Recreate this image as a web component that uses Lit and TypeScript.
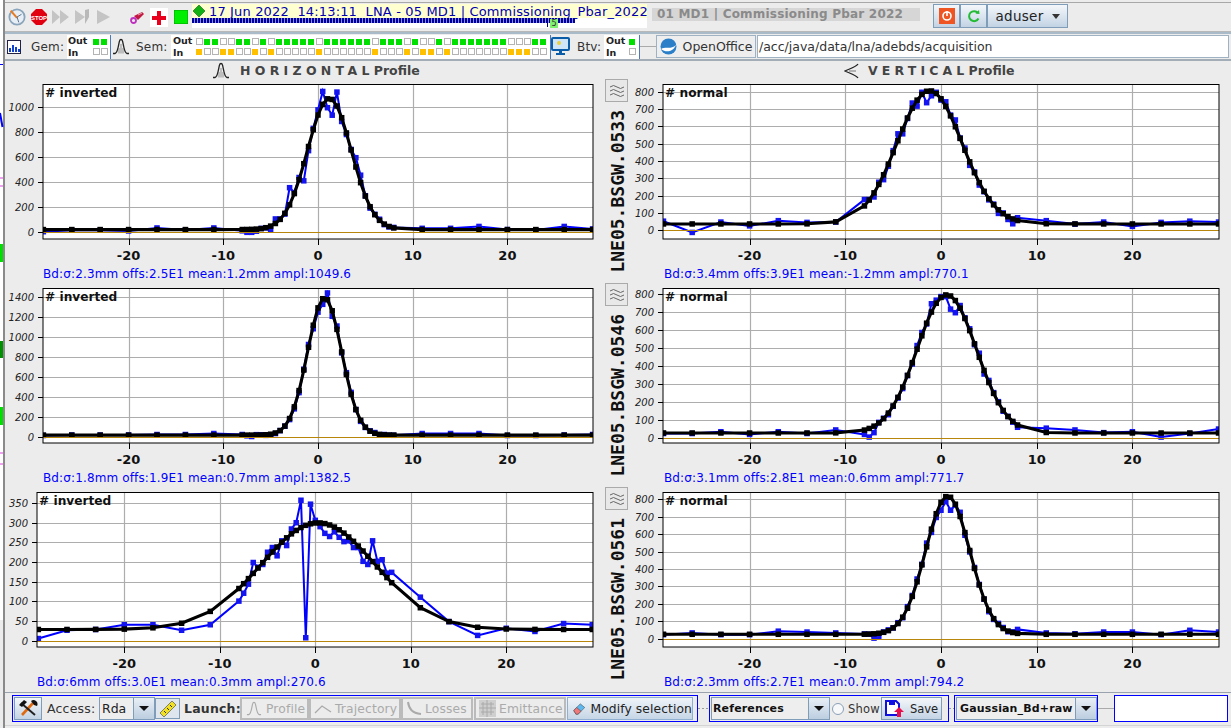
import { LitElement, html, css, svg } from "lit";
import { customElement } from "lit/decorators.js";

const XS: number[] = [-29, -26, -23, -20, -17, -14, -11];
for (let i = -16; i <= 16; i++) XS.push(i / 2);
XS.push(11, 14, 17, 20, 23, 26, 29);

interface Plot {
  tag: string; left: number; right: number; x0: number; xs: number; y0: number; yu: number;
  ticks: number[]; offs: number; amp: number; mean: number; sig: number; blue: Record<string, number>;
  caption: string; seed: number; labelEnd: number; name?: string;
}
const seq = (n: number, s: number) => Array.from({ length: n }, (_, i) => i * s);

const PLOTS: Plot[] = [
  { tag: "# inverted", left: 43, right: 593, x0: 318, xs: 9.47, y0: 152.7, yu: 0.125, ticks: seq(6, 200), offs: 25, amp: 1050, mean: 1.2, sig: 2.3, seed: 1, labelEnd: 34,
    blue: { "-29": 8, "-26": 20, "-23": 20, "-20": 14, "-17": 38, "-14": 22, "-11": 38, "-8": 15, "-7.5": 3, "-7": 3, "-6.5": 12, "-5": 25, "-4.5": 110, "-4": 110, "-3": 360, "-1.5": 415, "0.5": 1130, "1": 1000, "1.5": 940, "2": 1125, "4": 600, "4.5": 460, "11": 35, "14": 35, "17": 50, "20": 25, "23": 22, "26": 50, "29": 30 },
    caption: "Bd:σ:2.3mm offs:2.5E1 mean:1.2mm ampl:1049.6" },
  { tag: "# normal", left: 663, right: 1219, x0: 941, xs: 9.57, y0: 150.7, yu: 0.173, ticks: seq(9, 100), offs: 39, amp: 770, mean: -1.2, sig: 3.4, seed: 2, labelEnd: 654, name: "LNE05.BSGW.0533",
    blue: { "-29": 55, "-26": -10, "-23": 50, "-20": 28, "-17": 58, "-14": 48, "-11": 50, "-8": 180, "-7.5": 180, "-7": 195, "-6": 295, "-4.5": 560, "-4": 560, "-2.5": 720, "-2": 800, "-1.5": 740, "-1": 780, "-0.5": 800, "0": 755, "1.5": 640, "6": 100, "7": 65, "7.5": 40, "8": 75, "11": 58, "14": 38, "17": 50, "20": 25, "23": 48, "26": 55, "29": 50 },
    caption: "Bd:σ:3.4mm offs:3.9E1 mean:-1.2mm ampl:770.1" },
  { tag: "# inverted", left: 43, right: 593, x0: 318, xs: 9.47, y0: 153, yu: 0.0993, ticks: seq(8, 200), offs: 19, amp: 1382, mean: 0.7, sig: 1.8, seed: 3, labelEnd: 34,
    blue: { "-29": 15, "-26": 20, "-23": 20, "-20": 20, "-17": 25, "-14": 25, "-11": 35, "-8": 25, "-7": 5, "11": 35, "14": 35, "17": 35, "20": 15, "23": 15, "26": 20, "29": 25 },
    caption: "Bd:σ:1.8mm offs:1.9E1 mean:0.7mm ampl:1382.5" },
  { tag: "# normal", left: 663, right: 1219, x0: 941, xs: 9.57, y0: 154, yu: 0.179, ticks: seq(9, 100), offs: 28, amp: 771.7, mean: 0.6, sig: 3.1, seed: 4, labelEnd: 654, name: "LNE05.BSGW.0546",
    blue: { "-29": 25, "-26": 25, "-23": 35, "-20": 20, "-17": 35, "-14": 25, "-11": 45, "-8": 20, "-7.5": 5, "-7": 30, "-1": 750, "-0.5": 770, "0": 790, "0.5": 790, "1": 720, "1.5": 700, "2": 740, "3": 610, "8": 60, "11": 55, "14": 45, "17": 30, "20": 35, "23": 5, "26": 25, "29": 50 },
    caption: "Bd:σ:3.1mm offs:2.8E1 mean:0.6mm ampl:771.7" },
  { tag: "# inverted", left: 37, right: 593, x0: 315.3, xs: 9.55, y0: 153.3, yu: 0.394, ticks: seq(8, 50), offs: 30, amp: 270.6, mean: 0.3, sig: 6, seed: 5, labelEnd: 28,
    blue: { "-29": 7, "-26": 28, "-23": 30, "-20": 42, "-17": 42, "-14": 28, "-11": 42, "-8": 102, "-7.5": 122, "-7": 145, "-6.5": 200, "-6": 188, "-5.5": 195, "-5": 226, "-4.5": 238, "-4": 217, "-3.5": 255, "-3": 243, "-2.5": 285, "-2": 301, "-1.5": 358, "-1": 9, "-0.5": 348, "0": 307, "0.5": 291, "1": 274, "1.5": 266, "2": 278, "2.5": 264, "3": 253, "3.5": 255, "4": 238, "4.5": 238, "5": 203, "5.5": 195, "6": 255, "6.5": 203, "7": 207, "7.5": 173, "8": 175, "11": 112, "14": 50, "17": 15, "20": 33, "23": 25, "26": 45, "29": 42 },
    caption: "Bd:σ:6mm offs:3.0E1 mean:0.3mm ampl:270.6" },
  { tag: "# normal", left: 663, right: 1219, x0: 941, xs: 9.57, y0: 151, yu: 0.174, ticks: seq(9, 100), offs: 27, amp: 794.2, mean: 0.7, sig: 2.3, seed: 6, labelEnd: 654, name: "LNE05.BSGW.0561",
    blue: { "-29": 25, "-26": 35, "-23": 25, "-20": 25, "-17": 45, "-14": 40, "-11": 35, "-7": 5, "-6.5": 15, "0": 740, "0.5": 790, "1": 740, "1.5": 770, "8": 55, "11": 35, "14": 30, "17": 40, "20": 40, "23": 25, "26": 50, "29": 40 },
    caption: "Bd:σ:2.3mm offs:2.7E1 mean:0.7mm ampl:794.2" },
];

const SEM_OUT = "01100110101111101111110111" + "01" + "00101111111000" + "11";
const SEM_IN = [0, 3, 4, 7, 9, 15, 22, 26, 28, 29, 31, 39, 40, 41];

const gauss = svg`<path d="M1 15.5 H3 C6 15 6.5 6 7.5 3 C8 1 10 1 10.5 3 C11.5 6 12 15 15 15.5 H17" fill="none" stroke="#222" stroke-width="1.3"/><path d="M7 15.5V10M9 15.5V6M11 15.5V10" stroke="#777" stroke-width=".8" fill="none"/>`;

function chart(p: Plot, idx: number) {
  const ox = p.left > 600 ? 632 : 5;
  const W = p.left > 600 ? 599 : 595;
  const top = 4.5, bottom = 159;
  const sx = (x: number) => p.x0 + x * p.xs;
  const sy = (v: number) => p.y0 - v * p.yu;
  const fit = (x: number) => p.offs + p.amp * Math.exp(-((x - p.mean) ** 2) / (2 * p.sig * p.sig));
  const noise = (i: number) => { const v = Math.sin((i + 1) * 12.9898 + p.seed * 78.233) * 43758.5453; return v - Math.floor(v) - 0.5; };
  const blue = XS.map((x, i) => {
    const o = p.blue[String(x)];
    if (o !== undefined) return o;
    return fit(x) + noise(i) * (p.amp * 0.012 + (fit(x) - p.offs) * 0.09);
  });
  const black = XS.map(fit);
  const pts = (ys: number[]) => XS.map((x, i) => `${sx(x).toFixed(1)},${sy(ys[i]).toFixed(1)}`).join(" ");
  const gx = [-20, -10, 0, 10, 20];
  const cid = `c${idx}`;
  const zero = Math.floor(sy(0)) + 0.5;
  return html`<svg class="chart" width=${W} height="184" viewBox="${ox} 0 ${W} 184">
    <defs><clipPath id=${cid}><rect x=${p.left} y=${top} width=${p.right - p.left} height=${bottom - top}></rect></clipPath></defs>
    <rect x=${p.left} y=${top} width=${p.right - p.left} height=${bottom - top} fill="#fff"></rect>
    ${gx.map((g) => { const x = Math.round(sx(g)) + 0.5; return svg`<line x1=${x} x2=${x} y1=${top} y2=${bottom} stroke="#adadad" stroke-width="1.2"/><line x1=${x} x2=${x} y1=${bottom} y2=${bottom + 6} stroke="#000"/><text x=${sx(g)} y="180" class="xl">${g}</text>`; })}
    ${p.ticks.map((t) => { const y = Math.floor(sy(t)) + 0.5; return svg`<line x1=${p.left} x2=${p.right} y1=${y} y2=${y} stroke="#adadad" stroke-width="1.2"/><line x1=${p.left - 5} x2=${p.left} y1=${y} y2=${y} stroke="#000"/><text x=${p.labelEnd} y=${y + 3.5} class="yl">${t}</text>`; })}
    <g clip-path="url(#${cid})">
      <polyline points=${pts(blue)} fill="none" stroke="#0000ff" stroke-width="2"/>
      ${XS.map((x, i) => svg`<rect x=${sx(x) - 2.75} y=${sy(blue[i]) - 2.75} width="5.5" height="5.5" fill="#1414f0"/>`)}
      <polyline points=${pts(black)} fill="none" stroke="#000" stroke-width="3.1"/>
      ${XS.map((x, i) => svg`<rect x=${sx(x) - 2.75} y=${sy(black[i]) - 2.75} width="5.5" height="5.5" fill="#000"/>`)}
      <rect x=${p.left} y=${zero - 0.5} width=${p.right - p.left} height="1" fill="#b8860b"/>
    </g>
    <rect x=${p.left} y=${top} width=${p.right - p.left} height=${bottom - top} fill="none" stroke="#000"></rect>
    <text x=${p.left + 2} y="17" class="tag">${p.tag}</text>
  </svg>`;
}

const waves = html`<svg width="16" height="14" viewBox="0 0 16 14"><path d="M1 3q3.5-3 7 0t7 0M1 7q3.5-3 7 0t7 0M1 11q3.5-3 7 0t7 0" fill="none" stroke="#666" stroke-width="1"/></svg>`;

@customElement("app-root")
export class AppRoot extends LitElement {
  static styles = css`
    :host { display: block; width: 1231px; height: 728px; overflow: hidden; background: #ececec; font-family: "DejaVu Sans", sans-serif; color: #222; }
    .page { display: flex; width: 1231px; height: 728px; }
    .strip { flex: none; width: 5px; height: 728px; display: block; }
    .main { flex: 1; min-width: 0; display: flex; flex-direction: column; }
    .r1 { flex: none; height: 28px; margin-top: 2px; border-top: 1px solid #a8a8a8; display: flex; align-items: center; border-bottom: 1px solid #b8b8b8; }
    .r1 > svg { flex: none; }
    .status { flex: none; width: 455px; height: 24px; margin-left: 4px; background: #fff; display: flex; flex-direction: column; position: relative; align-self: flex-start; margin-top: 1px; }
    .stext { height: 14px; background: #ffffd0; color: #0000b0; font-size: 13px; line-height: 13px; white-space: pre; display: flex; align-items: center; padding-left: 1px; letter-spacing: 0.15px; }
    .stext svg { flex: none; margin-right: 4px; }
    .ticks { width: 383px; height: 5px; margin-top: 0; background: repeating-linear-gradient(90deg, #0000a0 0 2px, #8d8dd8 2px 3px); }
    .mark { position: absolute; left: 355px; top: 14px; width: 1px; height: 9px; background: #000080; }
    .badge { position: absolute; left: 358px; top: 15px; width: 8px; height: 9px; background: #80f070; color: #333; font-size: 8px; line-height: 9px; text-align: center; }
    .ghost { flex: none; width: 268px; height: 13px; margin-left: 5px; background: #d6d6d6; color: #8a8a8a; font-size: 12px; font-weight: 700; line-height: 13px; padding-left: 5px; box-sizing: border-box; letter-spacing: 0.2px; white-space: nowrap; align-self: flex-start; margin-top: 5px; overflow: hidden; }
    .btn { flex: none; display: flex; align-items: center; justify-content: center; box-sizing: border-box; border: 1px solid #7f9db9; background: linear-gradient(#f4f7fa, #c3d3e4); font-size: 12px; color: #222; }
    .top-btns { display: flex; margin-left: 13px; height: 24px; align-self: flex-start; margin-top: 1px; }
    .user { width: 81px; font-size: 13.5px; font-weight: 500; gap: 8px; letter-spacing: .3px; }
    .r2 { flex: none; height: 25px; border-top: 2px solid #a9bac9; border-bottom: 2px solid #a3adb7; display: flex; align-items: center; }
    .lab { flex: none; font-size: 12px; color: #333; letter-spacing: .2px; }
    .wbox { flex: none; height: 24px; background: #fff; display: flex; align-items: center; box-sizing: border-box; }
    .oi { font-size: 9.5px; font-weight: 700; line-height: 11.5px; width: 20px; color: #222; }
    .rows { display: flex; flex-direction: column; gap: 3px; }
    .row { display: flex; gap: 1px; }
    .sq { width: 7px; height: 7px; box-sizing: border-box; border: 1px solid #b4b4b4; background: #fff; }
    .sq.g { background: #00e000; border: none; width: 6px; height: 6px; margin: .5px 1px .5px 0; }
    .sq.o { background: #ffc000; border: none; width: 6px; height: 6px; margin: .5px 1px .5px 0; }
    .vsep { flex: none; width: 1px; height: 24px; background: #4a7ab8; }
    .dash { flex: none; height: 1px; background: #aaa; }
    .oo { width: 100px; height: 23px; gap: 6px; border-color: #9fb2c4; background: #eeeeee; font-size: 12.5px; color: #333; }
    .url { flex: none; width: 472px; height: 23px; margin-left: 1px; box-sizing: border-box; background: #fff; border: 1px solid #9fb2c4; font-size: 12.5px; line-height: 21px; padding-left: 1px; color: #333; }
    .titles { flex: none; height: 19px; display: flex; align-items: center; font-size: 12.5px; font-weight: 700; color: #444; }
    .t { display: flex; align-items: center; white-space: pre; }
    .t1 { margin-left: 207px; width: 632px; gap: 10px; }
    .t2 { gap: 9px; }
    .sp { letter-spacing: 4.3px; }
    .sp2 { letter-spacing: 4.15px; }
    .plots { flex: none; height: 612px; display: grid; grid-template-columns: 595px 599px; grid-template-rows: repeat(3, 204px); }
    .cell { display: flex; min-width: 0; }
    .col { display: flex; flex-direction: column; min-width: 0; }
    .side { flex: none; width: 32px; display: flex; flex-direction: column; align-items: flex-start; }
    .wave { width: 23px; height: 23px; margin: -1px 0 0 5px; box-sizing: border-box; border: 1px solid #aaa; background: #e8e8e8; display: flex; align-items: center; justify-content: center; }
    .vlabel { writing-mode: vertical-rl; transform: rotate(180deg); font-family: "DejaVu Sans Mono", monospace; font-weight: 700; font-size: 18px; line-height: 20px; margin: 8px 0 0 8px; color: #111; white-space: nowrap; }
    .chart { display: block; }
    .chart text { font-family: "DejaVu Sans", sans-serif; }
    .chart .xl { font-size: 13px; font-weight: 700; text-anchor: middle; fill: #111; }
    .chart .yl { font-size: 10px; font-style: italic; text-anchor: end; fill: #222; }
    .chart .tag { font-size: 12.2px; font-weight: 700; fill: #111; }
    .cap { font-size: 12px; line-height: 20px; height: 20px; color: #0000ff; white-space: nowrap; letter-spacing: .13px; }
    .bar { flex: none; height: 34px; border-top: 1px solid #9aa3ad; border-bottom: 1px solid #d4d4d4; display: flex; align-items: flex-start; box-sizing: border-box; padding-top: 2px; }
    .grp { flex: none; height: 27px; box-sizing: border-box; border: 1px solid #0000ff; display: flex; align-items: center; }
    .g1 { margin-left: 7px; width: 686px; padding-left: 1px; }
    .g2 { width: 240px; padding-left: 1px; }
    .g3 { width: 144px; padding-left: 1px; }
    .g4 { width: 114px; background: #fff; }
    .conn { flex: none; height: 27px; display: flex; align-items: center; }
    .conn i { display: block; height: 1px; background: #aaa; }
    .conn i.dot { background: repeating-linear-gradient(90deg, #999 0 2px, transparent 2px 4px); }
    .lbl2 { flex: none; font-size: 12.5px; color: #333; letter-spacing: .2px; }
    .lbl3 { flex: none; font-size: 12.5px; font-weight: 700; color: #333; letter-spacing: .2px; }
    .combo { flex: none; height: 23px; display: flex; box-sizing: border-box; border: 1px solid #7f9db9; background: #eee; font-size: 12.5px; }
    .combo .v { flex: 1; min-width: 0; padding-left: 2px; line-height: 21px; }
    .combo .v.b { font-weight: 700; font-size: 11px; color: #111; letter-spacing: .15px; white-space: nowrap; padding-left: 1px; }
    .arrow { flex: none; width: 20px; border-left: 1px solid #7f9db9; background: linear-gradient(#e8eef5, #bccee0); display: flex; align-items: center; justify-content: center; }
    .tri { width: 0; height: 0; border-left: 5px solid transparent; border-right: 5px solid transparent; border-top: 5px solid #111; }
    .off { flex: none; height: 23px; box-sizing: border-box; border: 2px solid #bbb; background: #ececec; color: #aaa; font-size: 12.3px; display: flex; align-items: center; gap: 3px; padding-left: 3px; letter-spacing: .15px; white-space: nowrap; }
    .mod { flex: none; width: 126px; height: 23px; box-sizing: border-box; border: 1px solid #8fb0d0; background: linear-gradient(#eef3f8, #c6d6e6); font-size: 12.3px; color: #222; display: flex; align-items: center; gap: 5px; padding-left: 5px; white-space: nowrap; letter-spacing: .1px; }
    .radio { flex: none; width: 12px; height: 12px; box-sizing: border-box; border: 1px solid #8aa0b6; border-radius: 50%; background: #f6f8fa; margin: 0 4px 0 2px; }
  `;

  render() {
    const out = SEM_OUT.split("");
    return html`<div class="page">
      <svg class="strip" viewBox="0 0 5 728">
        <rect width="5" height="728" fill="#fff"></rect>
        <rect x="3" width="2" height="728" fill="#8a8a8a"></rect>
        <path d="M0 113L2.5 127" stroke="#0000ff" stroke-width="2"></path>
        <rect y="64" width="3" height="1" fill="#0000ff"></rect>
        <path d="M0 178H3M0 186H3M0 453H3M0 464H3" stroke="#e040e0"></path>
        <rect y="244" width="3" height="18" fill="#00e000"></rect>
        <rect y="341" width="3" height="17" fill="#009000"></rect>
        <rect y="407" width="3" height="18" fill="#00e000"></rect>
        <rect y="620" width="3" height="108" fill="#ececec"></rect>
      </svg>
      <div class="main">
        <div class="r1">
          <svg width="18" height="18" viewBox="0 0 20 20" style="margin-left:3px"><circle cx="10" cy="10" r="8.5" fill="#e8eef5" stroke="#8aa4bc" stroke-width="2"></circle><path d="M10 11L3 3" stroke="#e87a20" stroke-width="2.2"></path><path d="M10 10L15 7M10 10L12 16" stroke="#4a6a8a" stroke-width="1"></path></svg>
          <svg width="16" height="16" viewBox="0 0 16 16" style="margin-left:5px"><path d="M5 0H11L16 5V11L11 16H5L0 11V5Z" fill="#e00010"></path><text x="8" y="10.5" font-size="6" font-weight="700" text-anchor="middle" fill="#fff" font-family="Liberation Sans">STOP</text></svg>
          <svg width="17" height="14" viewBox="0 0 17 14" style="margin-left:5px"><path d="M0 0L8 7L0 14ZM8 0L17 7L8 14Z" fill="#c4c4c4"></path></svg>
          <svg width="14" height="16" viewBox="0 0 14 16" style="margin-left:6px"><path d="M0 1L10 8L0 15Z" fill="#c4c4c4"></path><path d="M10 1L14 0V8L10 15Z" fill="#b8b8b8"></path></svg>
          <svg width="13" height="14" viewBox="0 0 13 14" style="margin-left:8px"><path d="M0 0L13 7L0 14Z" fill="#c4c4c4"></path></svg>
          <svg width="14" height="13" viewBox="0 0 14 13" style="margin-left:20px"><path d="M4 5L12 1L14 3L8 9Z" fill="#c01840"></path><path d="M8 4L12 2" stroke="#f0a0b0"></path><circle cx="3.5" cy="9.5" r="2.5" fill="none" stroke="#c030c0" stroke-width="1.8"></circle></svg>
          <svg width="18" height="19" viewBox="0 0 18 19" style="margin-left:6px"><rect width="18" height="19" fill="#fff"></rect><path d="M7 3H11V8H16V12H11V17H7V12H2V8H7Z" fill="#e8001c"></path></svg>
          <svg width="14" height="14" viewBox="0 0 14 14" style="margin-left:6px"><rect width="14" height="14" fill="#00ee00" stroke="#00a000"></rect></svg>
          <div class="status">
            <div class="stext"><svg width="12" height="12" viewBox="0 0 12 12"><path d="M6 0L12 6L6 12L0 6Z" fill="#12b012" stroke="#0a600a" stroke-width=".6"></path></svg><span>17 Jun 2022  14:13:11  LNA - 05 MD1 | Commissioning_Pbar_2022</span></div>
            <div class="ticks"></div><div class="mark"></div><div class="badge">5</div>
          </div>
          <div class="ghost">01 MD1 | Commissioning Pbar 2022</div>
          <div class="top-btns">
            <div class="btn" style="width:27px"><svg width="16" height="16" viewBox="0 0 16 16"><rect width="16" height="16" fill="#ee5522"></rect><circle cx="8" cy="8" r="4" fill="none" stroke="#fff" stroke-width="1.6"></circle><path d="M8 3V8" stroke="#fff" stroke-width="1.6"></path></svg></div>
            <div class="btn" style="width:27px"><svg width="14" height="14" viewBox="0 0 14 14"><path d="M11 4A5 5 0 1 0 11.5 9.5" fill="none" stroke="#22bb33" stroke-width="2"></path><path d="M8.5 4.5L12.5 5L12 1Z" fill="#22bb33"></path></svg></div>
            <div class="btn user"><span>aduser</span><span class="tri" style="border-left-width:4px;border-right-width:4px;border-top-width:5px;border-top-color:#333"></span></div>
          </div>
        </div>
        <div class="r2">
          <svg width="14" height="14" viewBox="0 0 14 14" style="margin-left:2px;flex:none"><rect x=".5" y=".5" width="13" height="13" fill="#fff" stroke="#224"></rect><path d="M2 12V8H4V12ZM5 12V5H7V12ZM8 12V7H10V12ZM11 12V9H13V12Z" fill="#1040d0"></path></svg>
          <span class="lab" style="margin-left:10px;width:36px">Gem:</span>
          <div class="wbox" style="width:43px;padding-left:1px"><div class="oi" style="width:25px">Out<br />In</div>
            <div class="rows">${this.sq("11")}${this.sq("00")}</div></div>
          <div class="vsep"></div>
          <svg width="18" height="17" viewBox="0 0 18 17" style="margin-left:1px;flex:none">${gauss}</svg>
          <span class="lab" style="margin-left:6px;width:35px">Sem:</span>
          <div class="wbox" style="width:379px;padding-left:2px"><div class="oi" style="width:23px">Out<br />In</div>
            <div class="rows">
              <div class="row">${out.map((c) => html`<div class="sq ${c === "1" ? "g" : ""}"></div>`)}</div>
              <div class="row">${out.map((_, i) => html`<div class="sq ${SEM_IN.includes(i) ? "o" : ""}"></div>`)}</div>
            </div></div>
          <div class="vsep"></div>
          <svg width="19" height="19" viewBox="0 0 19 19" style="flex:none"><rect x="1" y="1" width="17" height="12" rx="1" fill="#cfe4f7" stroke="#0a5ca8" stroke-width="2"></rect><circle cx="8" cy="6" r="2" fill="#e8d040"></circle><path d="M8 13H11V16H14V18H5V16H8Z" fill="#0a5ca8"></path></svg>
          <span class="lab" style="margin-left:7px;width:27px">Btv:</span>
          <div class="wbox" style="width:35px;padding-left:2px"><div class="oi" style="width:23px">Out<br />In</div>
            <div class="rows">${this.sq("1")}${this.sq("0")}</div></div>
          <div class="vsep"></div>
          <div class="dash" style="width:16px"></div>
          <div class="btn oo"><svg width="17" height="17" viewBox="0 0 17 17"><circle cx="8.5" cy="8.5" r="8" fill="#2a7fc8"></circle><path d="M1 11C6 8 11 12 16 7C13 14 6 15 1 11Z" fill="#fff"></path></svg><span>OpenOffice</span></div>
          <div class="url">/acc/java/data/lna/adebds/acquisition</div>
        </div>
        <div class="titles">
          <div class="t t1"><svg width="18" height="17" viewBox="0 0 18 17">${gauss}</svg><span><span class="sp">HORIZONTAL</span>Profile</span></div>
          <div class="t t2"><svg width="15" height="16" viewBox="0 0 15 16"><path d="M14 1C12 4 5 6 1 8C5 10 12 12 14 15" fill="none" stroke="#222" stroke-width="1.3"></path><path d="M5 8H12" stroke="#777"></path></svg><span><span class="sp2">VERTICAL</span>Profile</span></div>
        </div>
        <div class="plots">
          ${PLOTS.map((p, i) => p.name
            ? html`<div class="cell"><div class="side"><div class="wave">${waves}</div><div class="vlabel">${p.name}</div></div>
                <div class="col">${chart(p, i)}<div class="cap" style="padding-left:32px">${p.caption}</div></div></div>`
            : html`<div class="cell"><div class="col">${chart(p, i)}<div class="cap" style="padding-left:${p.left - 5}px">${p.caption}</div></div></div>`)}
        </div>
        <div class="bar">
          <div class="grp g1">
            <div class="btn" style="width:28px;height:23px"><svg width="19" height="17" viewBox="0 0 19 17"><path d="M3 15L14 3" stroke="#e06a10" stroke-width="2.6"></path><path d="M2 3L16 15" stroke="#222" stroke-width="2"></path><path d="M0 5L5 0L8 2L3 7Z" fill="#111"></path><path d="M12 1A4 4 0 0 1 18 6L15 5Z" fill="#111"></path></svg></div>
            <span class="lbl2" style="margin-left:5px;width:52px">Access:</span>
            <div class="combo" style="width:56px"><span class="v">Rda</span><span class="arrow"><span class="tri"></span></span></div>
            <div class="btn" style="width:25px;height:21px;background:#dfe6ee"><svg width="18" height="18" viewBox="0 0 18 18"><path d="M1 13L13 1L17 5L5 17Z" fill="#f0e020" stroke="#555" stroke-width=".7"></path><path d="M5 11L7 13M8 8L10 10M11 5L13 7" stroke="#333"></path></svg></div>
            <span class="lbl3" style="margin-left:4px;width:56px">Launch:</span>
            <div class="off" style="width:69px"><svg width="18" height="15" viewBox="0 0 18 17"><path d="M1 15.5H3C6 15 6.5 6 7.5 3C8 1 10 1 10.5 3C11.5 6 12 15 15 15.5H17" fill="none" stroke="#aaa" stroke-width="1.3"></path></svg>Profile</div>
            <div class="off" style="width:92px"><svg width="18" height="12" viewBox="0 0 18 12"><path d="M1 10L8 3L17 9" fill="none" stroke="#aaa" stroke-width="1.3"></path></svg>Trajectory</div>
            <div class="off" style="width:72px"><svg width="16" height="15" viewBox="0 0 16 15"><path d="M2 1C3 8 6 12 15 13" fill="none" stroke="#aaa" stroke-width="2"></path></svg>Losses</div>
            <div class="off" style="width:92px;margin-left:1px"><svg width="17" height="17" viewBox="0 0 17 17"><rect width="17" height="17" fill="#cfcfcf"></rect><path d="M0 8H17M8 0V17M4 2V15M12 2V15M2 4H15M2 12H15" stroke="#aaa"></path></svg>Emittance</div>
            <div class="mod" style="margin-left:1px"><svg width="17" height="16" viewBox="0 0 17 16"><path d="M1 10L10 1L16 6L7 15H4Z" fill="#5cb8ee" stroke="#444" stroke-width=".7"></path><path d="M1 10L5 6L11 11L7 15H4Z" fill="#f07878" stroke="#444" stroke-width=".7"></path></svg>Modify selection</div>
          </div>
          <div class="conn"><i class="dot" style="width:11px"></i></div>
          <div class="grp g2">
            <div class="combo" style="width:119px"><span class="v b">References</span><span class="arrow"><span class="tri"></span></span></div>
            <span class="radio"></span>
            <span class="lbl2" style="width:33px;font-size:11.5px">Show</span>
            <div class="btn" style="width:61px;height:23px;gap:6px"><svg width="19" height="17" viewBox="0 0 19 17"><path d="M1 1H11L14 4V15H1Z" fill="#fff" stroke="#1010e0" stroke-width="2"></path><rect x="4" y="1" width="6" height="4" fill="#1010e0"></rect><path d="M14 7L19 12H16V17H12V12H9Z" fill="#e8104c"></path></svg><span style="font-size:11.5px">Save</span></div>
          </div>
          <div class="conn"><i class="dot" style="width:5px"></i></div>
          <div class="grp g3">
            <div class="combo" style="width:141px"><span class="v b" style="padding-left:3px">Gaussian_Bd+raw</span><span class="arrow"><span class="tri"></span></span></div>
          </div>
          <div class="conn"><i style="width:16px"></i></div>
          <div class="grp g4"></div>
        </div>
      </div>
    </div>`;
  }

  sq(bits: string) {
    return html`<div class="row">${bits.split("").map((c) => html`<div class="sq ${c === "1" ? "g" : ""}"></div>`)}</div>`;
  }
}
